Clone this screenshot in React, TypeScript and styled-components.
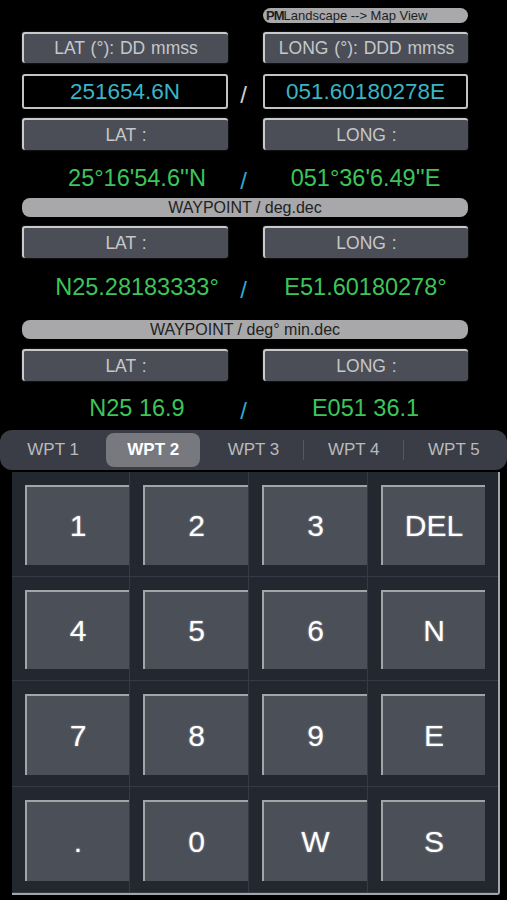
import React, { useState } from "react";
import styled, { createGlobalStyle } from "styled-components";

const GlobalStyle = createGlobalStyle`
  html, body {
    margin: 0;
    padding: 0;
    background: #000;
  }
  body {
    font-family: "Liberation Sans", Arial, sans-serif;
    width: 507px;
    height: 900px;
    overflow: hidden;
  }
`;

const Page = styled.div`
  width: 507px;
  height: 900px;
  background: #000;
  display: flex;
  flex-direction: column;
`;

const Coords = styled.div`
  display: grid;
  grid-template-columns: 206px 35px 205px;
  margin-left: 22px;
`;

const Full = styled.div`
  grid-column: 1 / 4;
`;

const Pill = styled.div`
  grid-column: 3;
  margin-top: 8px;
  height: 15px;
  border-radius: 8px;
  background: #a9a9ab;
  color: #1e1e1e;
  font-size: 13px;
  line-height: 15px;
  padding-left: 3px;
  white-space: nowrap;
  overflow: hidden;
`;

const Pm = styled.b`
  letter-spacing: -1px;
`;

const LabelButton = styled.button<{ $top: number; $h?: number }>`
  margin-top: ${(p) => p.$top}px;
  height: ${(p) => p.$h ?? 32}px;
  width: 100%;
  background: #4b4e57;
  border: none;
  border-top: 2px solid #c9cacc;
  border-left: 2px solid #c9cacc;
  border-radius: 3px;
  box-shadow: 0 0 2px rgba(255, 255, 255, 0.25);
  color: #c6c7ca;
  font-family: inherit;
  font-size: 17.5px;
  padding: 0;
  word-spacing: 1px;
`;

const Input = styled.div`
  margin-top: 11px;
  height: 35px;
  box-sizing: border-box;
  border: 2px solid #c2c3c5;
  border-radius: 3px;
  background: #000;
  color: #3ab4c6;
  font-size: 22.5px;
  display: flex;
  align-items: center;
  justify-content: center;
`;

const Slash = styled.div<{ $color: string; $shift?: number }>`
  display: flex;
  align-items: center;
  justify-content: center;
  color: ${(p) => p.$color};
  font-size: 24px;
  transform: translate(-2px, ${(p) => p.$shift ?? 0}px);
`;

const Value = styled.div<{ $pad: number; $h: number; $left?: boolean }>`
  height: ${(p) => p.$h}px;
  box-sizing: border-box;
  padding-top: ${(p) => p.$pad}px;
  padding-left: ${(p) => (p.$left ? 24 : 0)}px;
  color: #3dc45b;
  font-size: 23.5px;
  line-height: 24px;
  text-align: center;
  white-space: nowrap;
`;

const ValueSlash = styled(Slash)<{ $pad: number; $h: number }>`
  height: ${(p) => p.$h}px;
  box-sizing: border-box;
  padding-top: ${(p) => p.$pad}px;
  align-items: flex-start;
  line-height: 24px;
`;

const Bar = styled.div`
  height: 19px;
  border-radius: 8px;
  background: #a8a8aa;
  color: #222;
  font-size: 16px;
  line-height: 19px;
  text-align: center;
`;

const Tabs = styled.div`
  height: 40px;
  border-radius: 12px;
  background: #3a3d45;
  display: grid;
  grid-template-columns: repeat(5, 1fr);
  padding: 3px 3px;
  box-sizing: border-box;
`;

const Tab = styled.div<{ $active: boolean; $divider: boolean }>`
  position: relative;
  display: flex;
  align-items: center;
  justify-content: center;
  margin: 0 3px;
  border-radius: 8px;
  background: ${(p) => (p.$active ? "#77797f" : "transparent")};
  color: ${(p) => (p.$active ? "#fff" : "#b9babd")};
  font-weight: ${(p) => (p.$active ? "bold" : "normal")};
  font-size: 17px;
  cursor: pointer;
  &::before {
    content: "";
    display: ${(p) => (p.$divider ? "block" : "none")};
    position: absolute;
    left: -4px;
    top: 7px;
    bottom: 7px;
    width: 1px;
    background: #55585f;
  }
`;

const Keypad = styled.div`
  margin: 2px 7px 0 12px;
  display: grid;
  grid-template-columns: 118px 119px 119px 1fr;
  grid-template-rows: 105px 104px 106px 106px;
  background: #232730;
  border-right: 2px solid #a3a5a9;
  border-bottom: 2px solid #a3a5a9;
  border-bottom-right-radius: 3px;
`;

const Cell = styled.div<{ $last: boolean }>`
  padding: 13px ${(p) => (p.$last ? 13 : 0)}px 11px 13px;
  border-right: ${(p) => (p.$last ? "none" : "1px solid #363a44")};
  border-bottom: 1px solid #363a44;
  display: flex;
`;

const Key = styled.button`
  flex: 1;
  background: #4b4f58;
  border: none;
  border-top: 2px solid #a2a4a8;
  border-left: 2px solid #a2a4a8;
  color: #fff;
  font-family: inherit;
  font-size: 30px;
  text-shadow: 0 0 2px rgba(255, 255, 255, 0.5);
  padding: 0;
`;

const keys = ["1", "2", "3", "DEL", "4", "5", "6", "N", "7", "8", "9", "E", ".", "0", "W", "S"];
const tabs = ["WPT 1", "WPT 2", "WPT 3", "WPT 4", "WPT 5"];

export default function App() {
  const [active, setActive] = useState(1);

  return (
    <Page>
      <GlobalStyle />
      <Coords>
        <Pill>
          <Pm>PM</Pm>Landscape --&gt; Map View
        </Pill>

        <LabelButton $top={9} $h={31}>LAT (°): DD mmss</LabelButton>
        <div />
        <LabelButton $top={9} $h={31}>LONG (°): DDD mmss</LabelButton>

        <Input>251654.6N</Input>
        <Slash $color="#d0d0d0" $shift={9}>/</Slash>
        <Input>051.60180278E</Input>

        <LabelButton $top={9}>LAT :</LabelButton>
        <div />
        <LabelButton $top={9}>LONG :</LabelButton>

        <Value $pad={16} $h={48} $left>25°16'54.6''N</Value>
        <ValueSlash $color="#2fa9d2" $pad={19} $h={48}>/</ValueSlash>
        <Value $pad={16} $h={48}>051°36'6.49''E</Value>

        <Full>
          <Bar>WAYPOINT / deg.dec</Bar>
        </Full>

        <LabelButton $top={9}>LAT :</LabelButton>
        <div />
        <LabelButton $top={9}>LONG :</LabelButton>

        <Value $pad={17} $h={62} $left>N25.28183333°</Value>
        <ValueSlash $color="#2fa9d2" $pad={20} $h={62}>/</ValueSlash>
        <Value $pad={17} $h={62}>E51.60180278°</Value>

        <Full>
          <Bar>WAYPOINT / deg° min.dec</Bar>
        </Full>

        <LabelButton $top={10}>LAT :</LabelButton>
        <div />
        <LabelButton $top={10}>LONG :</LabelButton>

        <Value $pad={15} $h={49} $left>N25 16.9</Value>
        <ValueSlash $color="#2fa9d2" $pad={18} $h={49}>/</ValueSlash>
        <Value $pad={15} $h={49}>E051 36.1</Value>
      </Coords>

      <Tabs>
        {tabs.map((t, i) => (
          <Tab
            key={t}
            $active={i === active}
            $divider={i > 0 && i !== active && i - 1 !== active}
            onClick={() => setActive(i)}
          >
            {t}
          </Tab>
        ))}
      </Tabs>

      <Keypad>
        {keys.map((k, i) => (
          <Cell key={k} $last={i % 4 === 3}>
            <Key>{k}</Key>
          </Cell>
        ))}
      </Keypad>
    </Page>
  );
}
